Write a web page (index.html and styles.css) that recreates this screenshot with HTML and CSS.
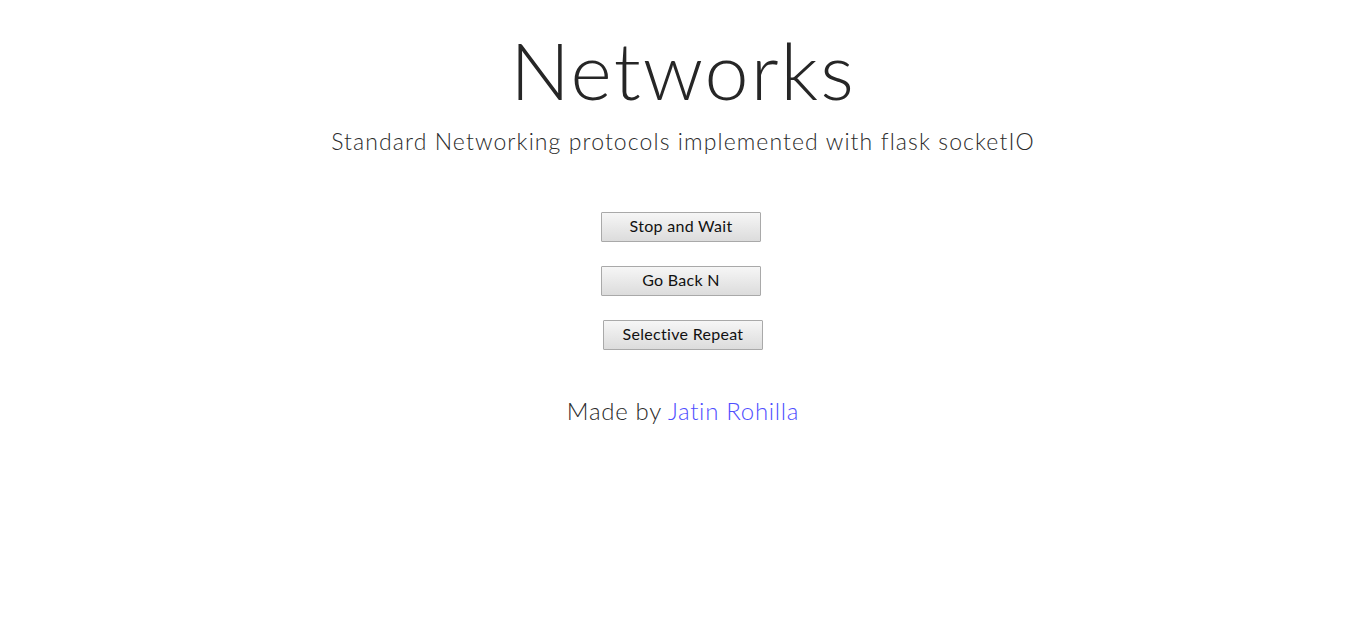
FILE: index.html
```html
<!DOCTYPE html>
<html>
<head>
<meta charset="utf-8">
<title>Networks</title>
<link rel="stylesheet" href="styles.css">
</head>
<body>
<div class="page">
  <h1 class="title">Networks</h1>
  <p class="subtitle">Standard Networking protocols implemented with flask socketIO</p>
  <div class="buttons">
    <div class="row"><button class="btn">Stop and Wait</button></div>
    <div class="row"><button class="btn">Go Back N</button></div>
    <div class="row shift"><button class="btn">Selective Repeat</button></div>
  </div>
  <p class="footer">Made by <a class="link" href="#">Jatin Rohilla</a></p>
</div>
</body>
</html>
```
FILE: styles.css
```css
html, body {
  margin: 0;
  padding: 0;
  background: #ffffff;
}
.page {
  font-family: "Lato", "Open Sans", sans-serif;
  color: #2b2b2b;
  text-align: center;
  padding-top: 27px;
  padding-left: 12px;
}
.title {
  margin: 0;
  font-size: 79px;
  font-weight: 300;
  line-height: 86px;
  letter-spacing: 2px;
  color: #262626;
}
.subtitle {
  margin: 13px 0 0;
  font-size: 23px;
  font-weight: 300;
  line-height: 30px;
  letter-spacing: 1.1px;
}
.buttons {
  margin-top: 56px;
  display: flex;
  flex-direction: column;
  align-items: center;
  gap: 24px;
}
.row {
  padding-right: 4px;
}
.row.shift {
  padding-right: 0;
}
.btn {
  width: 160px;
  height: 30px;
  border: 1px solid #a9a9a9;
  border-radius: 1px;
  background: linear-gradient(#f6f6f6, #dcdcdc);
  font-family: "Lato", "Open Sans", sans-serif;
  font-size: 16px;
  letter-spacing: 0.3px;
  color: #111;
  padding: 0 0 3px;
}
.footer {
  margin: 46px 0 0;
  font-size: 24px;
  font-weight: 300;
  line-height: 30px;
  letter-spacing: 0.7px;
}
.link {
  color: #4f4fff;
  text-decoration: none;
}
```
